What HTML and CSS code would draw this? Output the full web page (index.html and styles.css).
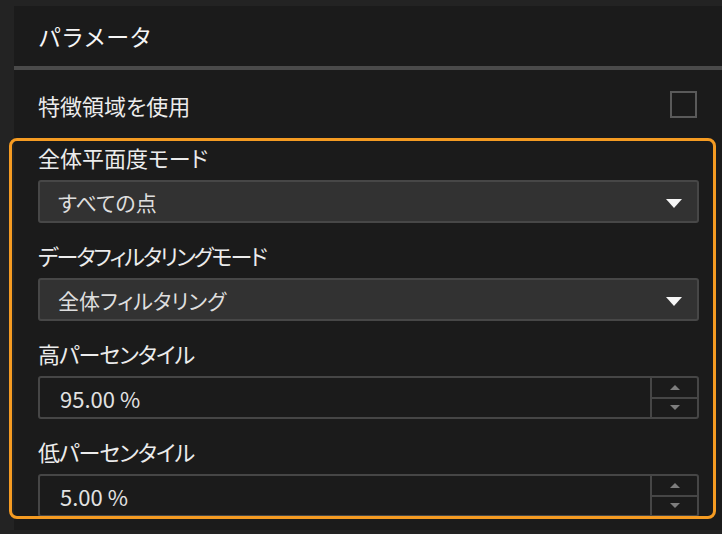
FILE: index.html
```html
<!DOCTYPE html>
<html lang="ja">

<head>
    <meta charset="UTF-8">
    <meta name="viewport" content="width=device-width, initial-scale=1.0">
    <title>パラメータ</title>
    <link rel="stylesheet" href="styles.css">
</head>

<body>
    <div class="screen">
        <div class="panel">
            <div class="panel-header">パラメータ</div>
            <div class="panel-body">
                <div class="check-row">
                    <span class="check-label">特徴領域を使用</span>
                    <span class="checkbox"></span>
                </div>
                <div class="group">
                    <div class="field">
                        <div class="field-label">全体平面度モード</div>
                        <div class="combo">
                            <span class="combo-text">すべての点</span>
                            <span class="combo-arrow"></span>
                        </div>
                    </div>
                    <div class="field">
                        <div class="field-label tight">データフィルタリングモード</div>
                        <div class="combo">
                            <span class="combo-text">全体フィルタリング</span>
                            <span class="combo-arrow"></span>
                        </div>
                    </div>
                    <div class="field">
                        <div class="field-label narrow">高パーセンタイル</div>
                        <div class="spin">
                            <span class="spin-text">95.00 %</span>
                            <div class="spin-buttons">
                                <span class="spin-up"></span>
                                <span class="spin-down"></span>
                            </div>
                        </div>
                    </div>
                    <div class="field">
                        <div class="field-label narrow">低パーセンタイル</div>
                        <div class="spin">
                            <span class="spin-text">5.00 %</span>
                            <div class="spin-buttons">
                                <span class="spin-up"></span>
                                <span class="spin-down"></span>
                            </div>
                        </div>
                    </div>
                </div>
            </div>
        </div>
        <div class="highlight"></div>
    </div>
</body>

</html>
```

FILE: styles.css
```css
body {
    margin: 0;
    background-color: #232323;
    font-family: "Noto Sans CJK JP", "Noto Sans", sans-serif;
    font-feature-settings: "palt";
    color: #ececec;
}

.screen {
    position: relative;
    width: 722px;
    height: 534px;
    overflow: hidden;
}

.panel {
    margin: 6px 0 0 14px;
    height: 524px;
    background-color: #1b1b1b;
    display: flex;
    flex-direction: column;
}

.panel-header {
    height: 60px;
    display: flex;
    align-items: center;
    padding-left: 24px;
    font-size: 23px;
    font-feature-settings: normal;
    color: #f6f6f6;
    border-bottom: 4px solid #4a4a4a;
}

.panel-body {
    height: 446px;
    overflow: hidden;
    padding: 0 23px 0 24px;
}

.check-row {
    height: 68px;
    display: flex;
    align-items: center;
    justify-content: space-between;
    font-size: 22px;
}

.check-label {
    padding-top: 2px;
}

.checkbox {
    width: 23px;
    height: 23px;
    border: 2px solid #5a5a5a;
    margin-right: 2px;
}

.group {
    padding-top: 4px;
    display: flex;
    flex-direction: column;
    gap: 17px;
}

.field {
    display: flex;
    flex-direction: column;
    gap: 8px;
}

.field-label {
    height: 30px;
    line-height: 30px;
    font-size: 22px;
    white-space: nowrap;
}

.field-label.tight {
    letter-spacing: -2px;
}

.field-label.narrow {
    letter-spacing: -1px;
}

.combo {
    height: 39px;
    border: 2px solid #474747;
    border-radius: 3px;
    background-color: #323232;
    display: flex;
    align-items: center;
    justify-content: space-between;
    padding: 0 15px 0 18px;
}

.combo-text {
    font-size: 21px;
    color: #dedede;
}

.combo-arrow {
    width: 0;
    height: 0;
    border-left: 8px solid transparent;
    border-right: 8px solid transparent;
    border-top: 9px solid #f6f6f6;
    margin-top: 3px;
}

.spin {
    height: 39px;
    border: 2px solid #464646;
    border-radius: 3px;
    display: flex;
    align-items: stretch;
}

.spin-text {
    flex: 1;
    display: flex;
    align-items: center;
    padding-left: 20px;
    font-size: 22px;
    color: #e2e2e2;
}

.spin-buttons {
    width: 45px;
    border-left: 2px solid #464646;
    display: flex;
    flex-direction: column;
}

.spin-up,
.spin-down {
    flex: 1;
    display: flex;
    align-items: center;
    justify-content: center;
}

.spin-up {
    border-bottom: 2px solid #464646;
}

.spin-up::before,
.spin-down::before {
    content: "";
    width: 0;
    height: 0;
    border-left: 5px solid transparent;
    border-right: 5px solid transparent;
}

.spin-up::before {
    border-bottom: 5px solid #7e7e7e;
}

.spin-down::before {
    border-top: 5px solid #7e7e7e;
}

.highlight {
    position: absolute;
    top: 138px;
    left: 9px;
    width: 701px;
    height: 375px;
    border: 3px solid #f59b22;
    border-radius: 8px;
    pointer-events: none;
}
```
